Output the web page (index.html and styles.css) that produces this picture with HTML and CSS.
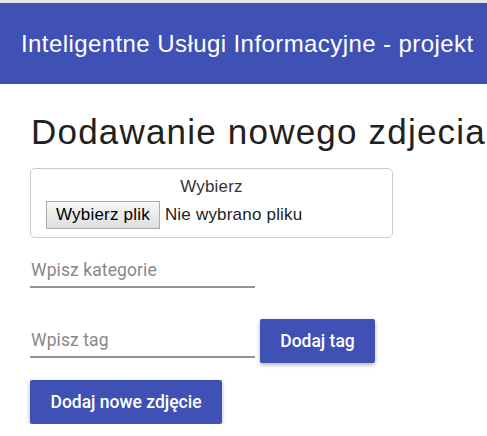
FILE: index.html
```html
<!DOCTYPE html>
<html lang="pl">
<head>
<meta charset="utf-8">
<link rel="stylesheet" href="styles.css">
</head>
<body>
<div class="topline"></div>
<header class="appbar">Inteligentne Usługi Informacyjne - projekt</header>
<main class="content">
  <h1 class="title">Dodawanie nowego zdjecia</h1>
  <div class="filebox">
    <div class="filelabel">Wybierz</div>
    <div class="filerow"><span class="filebtn">Wybierz plik</span><span class="filename">Nie wybrano pliku</span></div>
  </div>
  <div class="field field-cat"><input class="textin" type="text" placeholder="Wpisz kategorie"></div>
  <div class="tagrow">
    <div class="field"><input class="textin" type="text" placeholder="Wpisz tag"></div>
    <button class="btn btn-tag">Dodaj tag</button>
  </div>
  <button class="btn btn-add">Dodaj nowe zdjęcie</button>
</main>
</body>
</html>
```
FILE: styles.css
```css
html, body { margin: 0; padding: 0; background: #fff; }
body { font-family: "Liberation Sans", Arial, sans-serif; color: #212121; overflow: hidden; }
.topline { height: 3px; background: #e6e6e6; }
.appbar {
  height: 81px;
  background: #3f51b5;
  color: #fff;
  font-size: 24px;
  letter-spacing: 0.42px;
  display: flex;
  align-items: center;
  padding-left: 21px;
  padding-top: 1px;
  box-sizing: border-box;
  white-space: nowrap;
}
.content { padding-left: 30px; }
.title {
  margin: 28px 0 0 1px;
  font-size: 35px;
  letter-spacing: 1.2px;
  font-weight: normal;
  line-height: 40px;
  white-space: nowrap;
  color: #212121;
}
.filebox {
  margin-top: 16px;
  width: 363px;
  height: 70px;
  box-sizing: border-box;
  border: 1px solid #cccccc;
  border-radius: 5px;
  padding-top: 8px;
  font-size: 17px;
  letter-spacing: 0.2px;
  color: #333;
}
.filelabel { text-align: center; line-height: 20px; }
.filerow { display: flex; align-items: center; padding-left: 15px; margin-top: 4px; }
.filebtn {
  display: inline-block;
  height: 28px;
  line-height: 26px;
  box-sizing: border-box;
  padding: 0 9px 0 9px;
  border: 1px solid #adadad;
  background: linear-gradient(#f6f6f6, #dedede);
  color: #000;
}
.filename { margin-left: 5px; color: #222; }
.field { width: 225px; }
.textin {
  display: block;
  width: 100%;
  box-sizing: border-box;
  border: none;
  border-bottom: 2px solid #949494;
  outline: none;
  padding: 6px 0 0 1px;
  height: 40px;
  font-family: Roboto, "Liberation Sans", sans-serif;
  font-size: 17.5px;
  letter-spacing: 0.1px;
  background: transparent;
}
.textin::placeholder { color: #888888; }
.field-cat { margin-top: 10px; }
.tagrow { display: flex; align-items: flex-start; gap: 5px; margin-top: 30px; }
.btn {
  height: 44px;
  border: none;
  border-radius: 2px;
  background: #3f51b5;
  color: #fff;
  font-family: Roboto, "Liberation Sans", sans-serif;
  font-weight: 500;
  font-size: 17.5px;
  box-shadow: 0 2px 4px rgba(0,0,0,0.3);
  padding: 0;
  display: block;
}
.btn-tag { width: 115px; margin-top: 1px; }
.btn-add { width: 192px; margin-top: 17px; }
```
